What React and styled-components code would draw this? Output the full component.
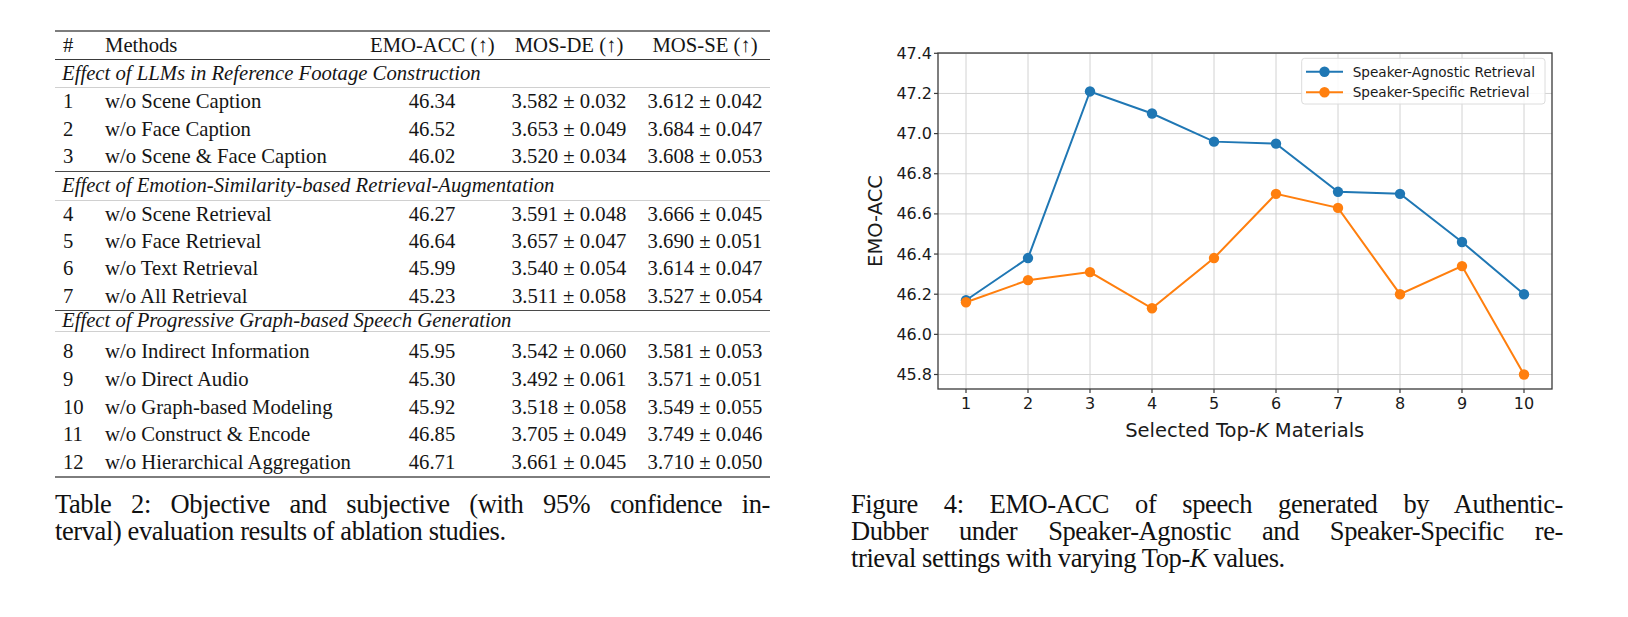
import React from "react";
import styled, { createGlobalStyle } from "styled-components";

const GlobalStyle = createGlobalStyle`
  html, body {
    margin: 0;
    padding: 0;
    background: #ffffff;
  }
  body {
    width: 1628px;
    height: 617px;
    overflow: hidden;
  }
`;

const Page = styled.div`
  display: flex;
  align-items: flex-start;
  gap: 70px;
  padding: 30px 0 0 55px;
  font-family: "Liberation Serif", "Times New Roman", serif;
  color: #151515;
`;

const LeftColumn = styled.div`
  width: 715px;
  display: flex;
  flex-direction: column;
`;

const RightColumn = styled.div`
  width: 725px;
  padding-top: 5px;
  display: flex;
  flex-direction: column;
`;

const Table = styled.div`
  border-top: 2px solid #7d7d7d;
  border-bottom: 2px solid #7d7d7d;
  font-size: 20.7px;
`;

const Row = styled.div`
  display: grid;
  grid-template-columns: 50px 265px 124px 150px 122px;
  padding-right: 4px;
  align-items: center;
  height: ${(p) => p.$h}px;
  line-height: 1;
  white-space: nowrap;
`;

const HeaderRow = styled(Row)`
  border-bottom: 1px solid #3a3a3a;
`;

const Num = styled.span`
  padding-left: 8px;
`;

const Method = styled.span``;

const Value = styled.span`
  text-align: center;
`;

const SectionRow = styled.div`
  display: flex;
  align-items: center;
  height: ${(p) => p.$h}px;
  padding-left: 7px;
  font-style: italic;
  line-height: 1;
  white-space: nowrap;
  border-top: ${(p) => (p.$first ? "none" : "1px solid #4a4a4a")};
  border-bottom: 1px solid #d0d0d0;
  margin-bottom: ${(p) => p.$after || 0}px;
`;

const Caption = styled.div`
  font-size: 26.5px;
  letter-spacing: -0.4px;
  line-height: 27px;
  color: #111;
  margin-top: ${(p) => p.$top}px;
  margin-left: ${(p) => p.$left || 0}px;
  width: ${(p) => p.$w}px;
`;

const CaptionLine = styled.div`
  text-align: justify;
  text-align-last: ${(p) => (p.$last ? "left" : "justify")};
  white-space: nowrap;
`;

const ChartSvg = styled.svg`
  display: block;
  font-family: "DejaVu Sans", sans-serif;
`;

const sections = [
  {
    title: "Effect of LLMs in Reference Footage Construction",
    h: 27,
    rowH: 27.5,
    rows: [
      ["1", "w/o Scene Caption", "46.34", "3.582 ± 0.032", "3.612 ± 0.042"],
      ["2", "w/o Face Caption", "46.52", "3.653 ± 0.049", "3.684 ± 0.047"],
      ["3", "w/o Scene & Face Caption", "46.02", "3.520 ± 0.034", "3.608 ± 0.053"],
    ],
  },
  {
    title: "Effect of Emotion-Similarity-based Retrieval-Augmentation",
    h: 28,
    rowH: 27.3,
    rows: [
      ["4", "w/o Scene Retrieval", "46.27", "3.591 ± 0.048", "3.666 ± 0.045"],
      ["5", "w/o Face Retrieval", "46.64", "3.657 ± 0.047", "3.690 ± 0.051"],
      ["6", "w/o Text Retrieval", "45.99", "3.540 ± 0.054", "3.614 ± 0.047"],
      ["7", "w/o All Retrieval", "45.23", "3.511 ± 0.058", "3.527 ± 0.054"],
    ],
  },
  {
    title: "Effect of Progressive Graph-based Speech Generation",
    h: 20,
    after: 6,
    rowH: 27.7,
    rows: [
      ["8", "w/o Indirect Information", "45.95", "3.542 ± 0.060", "3.581 ± 0.053"],
      ["9", "w/o Direct Audio", "45.30", "3.492 ± 0.061", "3.571 ± 0.051"],
      ["10", "w/o Graph-based Modeling", "45.92", "3.518 ± 0.058", "3.549 ± 0.055"],
      ["11", "w/o Construct & Encode", "46.85", "3.705 ± 0.049", "3.749 ± 0.046"],
      ["12", "w/o Hierarchical Aggregation", "46.71", "3.661 ± 0.045", "3.710 ± 0.050"],
    ],
  },
];

// chart data
const agnostic = [46.17, 46.38, 47.21, 47.1, 46.96, 46.95, 46.71, 46.7, 46.46, 46.2];
const specific = [46.16, 46.27, 46.31, 46.13, 46.38, 46.7, 46.63, 46.2, 46.34, 45.8];
const BLUE = "#1f77b4";
const ORANGE = "#ff7f0e";

const plot = { left: 98, right: 712, top: 18, bottom: 354 };
const xOf = (k) => 126 + (k - 1) * 62;
const yOf = (v) => 18.3 + (47.4 - v) * 200.75;
const yTicks = [45.8, 46.0, 46.2, 46.4, 46.6, 46.8, 47.0, 47.2, 47.4];
const xTicks = [1, 2, 3, 4, 5, 6, 7, 8, 9, 10];

function Series({ data, color }) {
  const pts = data.map((v, i) => `${xOf(i + 1)},${yOf(v)}`).join(" ");
  return (
    <g>
      <polyline points={pts} fill="none" stroke={color} strokeWidth="2" />
      {data.map((v, i) => (
        <circle key={i} cx={xOf(i + 1)} cy={yOf(v)} r="5.2" fill={color} />
      ))}
    </g>
  );
}

function Chart() {
  return (
    <ChartSvg width="725" height="420" viewBox="0 0 725 420">
      {/* grid */}
      {xTicks.map((k) => (
        <line key={"gx" + k} x1={xOf(k)} x2={xOf(k)} y1={plot.top} y2={plot.bottom} stroke="#d2d2d2" strokeWidth="1" />
      ))}
      {yTicks.map((v) => (
        <line key={"gy" + v} x1={plot.left} x2={plot.right} y1={yOf(v)} y2={yOf(v)} stroke="#d2d2d2" strokeWidth="1" />
      ))}

      <Series data={agnostic} color={BLUE} />
      <Series data={specific} color={ORANGE} />

      {/* spines */}
      <rect
        x={plot.left}
        y={plot.top}
        width={plot.right - plot.left}
        height={plot.bottom - plot.top}
        fill="none"
        stroke="#3a3a3a"
        strokeWidth="1.3"
      />

      {/* ticks + labels */}
      {yTicks.map((v) => (
        <g key={"ty" + v}>
          <line x1={plot.left - 4} x2={plot.left} y1={yOf(v)} y2={yOf(v)} stroke="#3a3a3a" strokeWidth="1.2" />
          <text x={plot.left - 6} y={yOf(v)} fontSize="16" textAnchor="end" dominantBaseline="central" fill="#1a1a1a">
            {v.toFixed(1)}
          </text>
        </g>
      ))}
      {xTicks.map((k) => (
        <g key={"tx" + k}>
          <line x1={xOf(k)} x2={xOf(k)} y1={plot.bottom} y2={plot.bottom + 4} stroke="#3a3a3a" strokeWidth="1.2" />
          <text x={xOf(k)} y={368} fontSize="16" textAnchor="middle" dominantBaseline="central" fill="#1a1a1a">
            {k}
          </text>
        </g>
      ))}

      <text x={404.7} y={395} fontSize="19.5" textAnchor="middle" dominantBaseline="central" fill="#1a1a1a">
        Selected Top-<tspan fontStyle="italic">K</tspan> Materials
      </text>
      <text
        x={35}
        y={186}
        fontSize="19.5"
        textAnchor="middle"
        dominantBaseline="central"
        fill="#1a1a1a"
        transform="rotate(-90 35 186)"
      >
        EMO-ACC
      </text>

      {/* legend */}
      <rect x="461.7" y="23.3" width="243.3" height="45.7" rx="3" fill="#ffffff" fillOpacity="0.85" stroke="#dcdcdc" />
      <line x1="466" x2="503" y1="36.7" y2="36.7" stroke={BLUE} strokeWidth="2" />
      <circle cx="484.5" cy="36.7" r="5.2" fill={BLUE} />
      <text x="512.7" y="36.7" fontSize="13.6" dominantBaseline="central" fill="#1a1a1a">
        Speaker-Agnostic Retrieval
      </text>
      <line x1="466" x2="503" y1="57.3" y2="57.3" stroke={ORANGE} strokeWidth="2" />
      <circle cx="484.5" cy="57.3" r="5.2" fill={ORANGE} />
      <text x="512.7" y="57.3" fontSize="13.6" dominantBaseline="central" fill="#1a1a1a">
        Speaker-Specific Retrieval
      </text>
    </ChartSvg>
  );
}

export default function App() {
  return (
    <>
      <GlobalStyle />
      <Page>
        <LeftColumn>
          <Table>
            <HeaderRow $h={27}>
              <Num>#</Num>
              <Method>Methods</Method>
              <Value>EMO-ACC (↑)</Value>
              <Value>MOS-DE (↑)</Value>
              <Value>MOS-SE (↑)</Value>
            </HeaderRow>
            {sections.map((s, si) => (
              <React.Fragment key={s.title}>
                <SectionRow $h={s.h} $first={si === 0} $after={s.after}>
                  {s.title}
                </SectionRow>
                {s.rows.map((r) => (
                  <Row key={r[0]} $h={s.rowH}>
                    <Num>{r[0]}</Num>
                    <Method>{r[1]}</Method>
                    <Value>{r[2]}</Value>
                    <Value>{r[3]}</Value>
                    <Value>{r[4]}</Value>
                  </Row>
                ))}
              </React.Fragment>
            ))}
          </Table>
          <Caption $top={12.5} $w={715}>
            <CaptionLine>Table 2: Objective and subjective (with 95% confidence in-</CaptionLine>
            <CaptionLine $last>terval) evaluation results of ablation studies.</CaptionLine>
          </Caption>
        </LeftColumn>
        <RightColumn>
          <Chart />
          <Caption $top={35.5} $left={11} $w={712}>
            <CaptionLine>Figure 4: EMO-ACC of speech generated by Authentic-</CaptionLine>
            <CaptionLine>Dubber under Speaker-Agnostic and Speaker-Specific re-</CaptionLine>
            <CaptionLine $last>
              trieval settings with varying Top-<i>K</i> values.
            </CaptionLine>
          </Caption>
        </RightColumn>
      </Page>
    </>
  );
}
